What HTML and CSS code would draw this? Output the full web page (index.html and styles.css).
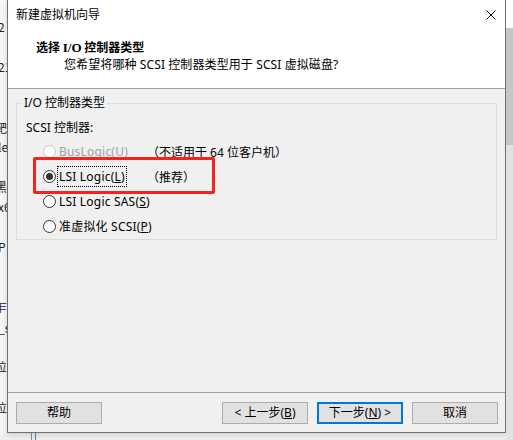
FILE: index.html
```html
<!DOCTYPE html>
<html lang="zh-CN">
<head>
<meta charset="utf-8">
<title>新建虚拟机向导</title>
<link rel="stylesheet" href="styles.css">
</head>
<body>
<div class="desk">
  <div class="left-strip">
    <div class="frag f1">2</div>
    <div class="frag f2">21</div>
    <div class="frag f3 cjk">靶</div>
    <div class="frag f4">le</div>
    <div class="frag f5 cjk">黑</div>
    <div class="frag f6">x6</div>
    <div class="frag f7">P</div>
    <div class="frag f8 cjk">乍</div>
    <div class="frag f9">_s</div>
    <div class="frag f10 cjk">位</div>
    <div class="frag f11 cjk">位</div>
  </div>
  <div class="dialog">
    <div class="titlebar">
      <span class="title">新建虚拟机向导</span>
      <svg class="close" width="10" height="10" viewBox="0 0 10 10"><path d="M0.5 0.5L9.5 9.5M9.5 0.5L0.5 9.5" stroke="#000" stroke-width="1" fill="none"/></svg>
    </div>
    <div class="header">
      <div class="h-title">选择 <span class="serif">I/O</span> 控制器类型</div>
      <div class="h-sub">您希望将哪种 SCSI 控制器类型用于 SCSI 虚拟磁盘?</div>
    </div>
    <div class="content">
      <div class="group">
        <span class="legend">I/O 控制器类型</span>
        <div class="label">SCSI 控制器:</div>
        <div class="opt first disabled">
          <span class="radio"></span>
          <span class="opt-main"><span class="opt-text">BusLogic(<u>U</u>)</span></span>
          <span class="note">（不适用于 64 位客户机）</span>
        </div>
        <div class="opt">
          <span class="radio checked"></span>
          <span class="opt-main"><span class="opt-text focus">LSI Logic(<u>L</u>)</span></span>
          <span class="note">（推荐）</span>
        </div>
        <div class="opt">
          <span class="radio"></span>
          <span class="opt-main"><span class="opt-text">LSI Logic SAS(<u>S</u>)</span></span>
        </div>
        <div class="opt">
          <span class="radio"></span>
          <span class="opt-main"><span class="opt-text">准虚拟化 SCSI(<u>P</u>)</span></span>
        </div>
        <div class="mark"></div>
      </div>
    </div>
    <div class="footer">
      <button class="btn help">帮助</button>
      <button class="btn">&lt; 上一步(<u>B</u>)</button>
      <button class="btn default">下一步(<u>N</u>) &gt;</button>
      <button class="btn">取消</button>
    </div>
  </div>
  <div class="right-strip"></div>
</div>
</body>
</html>
```
FILE: styles.css
```css
html, body {
  margin: 0;
  padding: 0;
}
body {
  width: 513px;
  height: 440px;
  overflow: hidden;
  font-family: "Noto Sans", "Noto Sans CJK SC", sans-serif;
  font-size: 12px;
  color: #000;
}
.desk {
  display: flex;
  align-items: flex-start;
  height: 440px;
  background:
    linear-gradient(to right, transparent 31px, #8c8c8c 31px, #8c8c8c 32px, transparent 32px, transparent 35px, #5a7fae 35px, #5a7fae 36px, transparent 36px),
    #f0f0f0;
}
.left-strip {
  width: 7px;
  height: 433px;
  overflow: hidden;
  background: #f6f6f6;
  color: #222;
  font-family: "Noto Sans CJK SC", sans-serif;
}
.frag {
  line-height: 16px;
  white-space: nowrap;
  margin-left: -2px;
}
.frag.cjk { margin-left: -5px; }
.f1 { margin-top: 19px; }
.f2 { margin-top: 24px; }
.f3 { margin-top: 45px; }
.f4 { margin-top: 3px; }
.f5 { margin-top: 24px; }
.f6 { margin-top: 4px; }
.f7 { margin-top: 24px; }
.f8 { margin-top: 44px; }
.f9 { margin-top: 5px; }
.f10 { margin-top: 23px; }
.f11 { margin-top: 25px; }

.dialog {
  width: 499px;
  height: 433px;
  box-sizing: border-box;
  border: 1px solid #707070;
  border-top: none;
  background: #f0f0f0;
  display: flex;
  flex-direction: column;
  box-shadow: 0 2px 6px rgba(0,0,0,0.15);
}
.titlebar {
  height: 30px;
  flex: none;
  background: #fff;
  display: flex;
  align-items: center;
  justify-content: space-between;
  padding: 0 9px 0 8px;
}
.title { line-height: 16px; }
.close { display: block; }
.header {
  height: 50px;
  flex: none;
  padding-top: 8px;
  background: #fff;
  border-bottom: 1px solid #a0a0a0;
}
.h-title {
  padding-left: 28px;
  line-height: 17px;
  font-weight: bold;
  font-family: "Noto Sans CJK SC", sans-serif;
}
.serif { font-family: "Liberation Serif", serif; font-size: 13px; }
.h-sub {
  padding-left: 56px;
  line-height: 17px;
  letter-spacing: 0.1px;
}
.content {
  flex: 1;
  padding: 14px 8px 0 8px;
}
.group {
  position: relative;
  height: 137px;
  box-sizing: border-box;
  border: 1px solid #dcdcdc;
  padding: 16px 0 0 9px;
}
.legend {
  position: absolute;
  top: -9px;
  left: 5px;
  padding: 0 2px;
  line-height: 16px;
  background: #f0f0f0;
}
.label { line-height: 16px; }
.opt {
  display: flex;
  align-items: center;
  height: 25px;
}
.opt.first { margin-top: 3px; }
.radio {
  flex: none;
  width: 13px;
  height: 13px;
  box-sizing: border-box;
  border: 1px solid #333;
  border-radius: 50%;
  background: #fff;
  margin-left: 17px;
  display: flex;
  align-items: center;
  justify-content: center;
}
.radio.checked::after {
  content: "";
  width: 7px;
  height: 7px;
  border-radius: 50%;
  background: #333;
}
.disabled .radio { border-color: #c4c4c4; }
.opt-main {
  flex: none;
  width: 93px;
  margin-left: 3px;
  white-space: nowrap;
}
.opt-text { line-height: 14px; letter-spacing: 0.2px; }
.disabled .opt-text { color: #a0a0a0; }
.focus {
  outline: 1px dotted #000;
  outline-offset: 1px;
}
.note {
  white-space: nowrap;
  margin-left: -5px;
}
.mark {
  position: absolute;
  left: 16px;
  top: 53px;
  width: 182px;
  height: 37px;
  box-sizing: border-box;
  border: 3px solid #f5231c;
  border-radius: 2px;
}
.footer {
  flex: none;
  height: 30px;
  padding: 9px 7px 0 8px;
  border-top: 1px solid #a0a0a0;
  display: flex;
  gap: 9px;
}
.btn {
  width: 86px;
  height: 22px;
  box-sizing: border-box;
  border: 1px solid #adadad;
  background: #e1e1e1;
  font-family: "Noto Sans", "Noto Sans CJK SC", sans-serif;
  font-size: 12px;
  color: #000;
  padding: 0;
  margin: 0;
  line-height: 18px;
}
.btn.help { margin-right: auto; }
.btn.default { border: 2px solid #0078d7; }
.right-strip {
  flex: 1;
  height: 440px;
  background: linear-gradient(#ffffff 0, #ffffff 28px, #c6c6c6 28px, #c6c6c6 145px, #e2e2e2 145px);
}
```
